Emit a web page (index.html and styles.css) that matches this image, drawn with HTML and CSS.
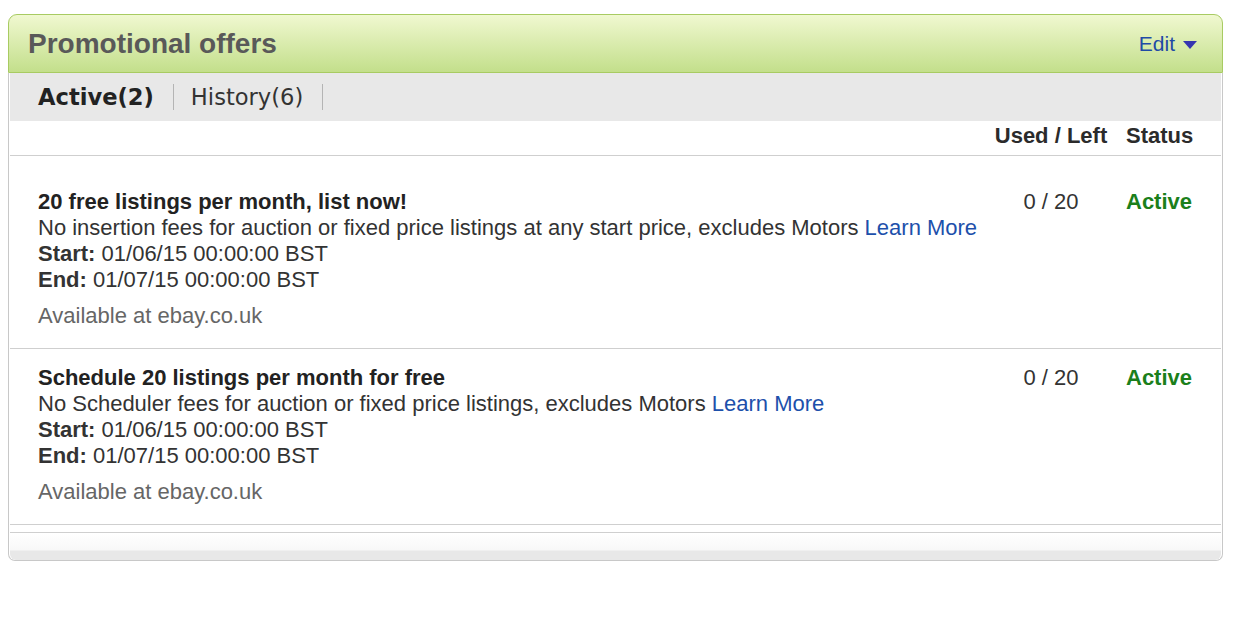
FILE: index.html
```html
<!DOCTYPE html>
<html lang="en">
<head>
  <meta charset="UTF-8">
  <meta name="viewport" content="width=device-width, initial-scale=1.0">
  <title>Promotional offers</title>
  <link rel="stylesheet" href="styles.css">
</head>
<body>
  <div class="panel">
    <div class="panel-head">
      <h2 class="title">Promotional offers</h2>
      <a href="javascript:;" class="edit">Edit <span class="caret"></span></a>
    </div>
    <div class="panel-body">
      <ul class="tabs">
        <li class="tab on"><a href="javascript:;">Active(2)</a></li>
        <li class="tab"><a href="javascript:;">History(6)</a></li>
      </ul>
      <div class="row head">
        <div></div>
        <div class="used">Used / Left</div>
        <div class="status">Status</div>
      </div>
      <div class="list">
        <div class="row offer">
          <div class="info">
            <div class="name">20 free listings per month, list now!</div>
            <div>No insertion fees for auction or fixed price listings at any start price, excludes Motors <a href="javascript:;" class="more">Learn More</a></div>
            <div><b>Start:</b> 01/06/15 00:00:00 BST</div>
            <div><b>End:</b> 01/07/15 00:00:00 BST</div>
            <div class="site">Available at ebay.co.uk</div>
          </div>
          <div class="used">0 / 20</div>
          <div class="status active">Active</div>
        </div>
        <div class="row offer">
          <div class="info">
            <div class="name">Schedule 20 listings per month for free</div>
            <div>No Scheduler fees for auction or fixed price listings, excludes Motors <a href="javascript:;" class="more">Learn More</a></div>
            <div><b>Start:</b> 01/06/15 00:00:00 BST</div>
            <div><b>End:</b> 01/07/15 00:00:00 BST</div>
            <div class="site">Available at ebay.co.uk</div>
          </div>
          <div class="used">0 / 20</div>
          <div class="status active">Active</div>
        </div>
      </div>
      <div class="panel-foot"></div>
    </div>
  </div>
</body>
</html>
```

FILE: styles.css
```css
body{
  margin: 0;
  background-color: #fff;
  font-family: "Liberation Sans", Arial, sans-serif;
  color: #333;
}

a{
  text-decoration: none;
}

ul{
  padding: 0;
  margin: 0;
  list-style: none;
}

.panel{
  width: 1215px;
  margin: 14px 0 0 8px;
}

.panel-head{
  display: flex;
  align-items: center;
  justify-content: space-between;
  height: 57px;
  padding: 0 25px 0 19px;
  border: 1px solid #a8cb62;
  border-radius: 9px 9px 0 0;
  background-image: linear-gradient(#f0f8d0, #c3df8b);
}

.panel-head .title{
  margin: 0;
  font-size: 28px;
  font-weight: bold;
  color: #595959;
}

.panel-head .edit{
  display: flex;
  align-items: center;
  gap: 8px;
  font-size: 21px;
  color: #1f4aa6;
}

.panel-head .caret{
  width: 0;
  height: 0;
  border-left: 7px solid transparent;
  border-right: 7px solid transparent;
  border-top: 8px solid #3535b0;
  margin-top: 2px;
}

.panel-body{
  padding: 0 1px;
  border: 1px solid #c8c8c8;
  border-top: 0;
  border-radius: 0 0 7px 7px;
}

.tabs{
  display: flex;
  align-items: center;
  height: 48px;
  padding-left: 28px;
  background-color: #e8e8e8;
  font-family: "DejaVu Sans", Verdana, sans-serif;
  font-size: 22.6px;
}

.tab{
  padding: 0 19px 0 17px;
  border-right: 1px solid #b4b4b4;
  line-height: 26px;
}

.tab:first-child{
  padding-left: 0;
}

.tab a{
  color: #333;
}

.tab.on a{
  font-weight: bold;
  color: #222;
}

.row{
  display: grid;
  grid-template-columns: minmax(0, 1fr) 116px 66px;
  column-gap: 17px;
  padding: 0 29px 0 28px;
  font-size: 22px;
  line-height: 26px;
  white-space: nowrap;
}

.row .used{
  text-align: center;
}

.row.head{
  height: 30px;
  padding-bottom: 4px;
  align-items: center;
  font-weight: bold;
  color: #2b2b2b;
  border-bottom: 1px solid #cfcfcf;
}

.list{
  padding-top: 17px;
}

.offer{
  padding-top: 16px;
  padding-bottom: 19px;
  border-bottom: 1px solid #cfcfcf;
}

.offer .name{
  font-weight: bold;
  color: #222;
}

.offer .more{
  color: #1d50ab;
}

.offer .site{
  margin-top: 10px;
  color: #666;
}

.status.active{
  font-weight: bold;
  color: #1b7f1b;
}

.panel-foot{
  height: 27px;
  margin-top: 7px;
  border-top: 1px solid #cfcfcf;
  border-radius: 0 0 6px 6px;
  background-image: linear-gradient(#fff 0, #f8f8f8 17px, #e8e8e8 18px, #e8e8e8 100%);
}
```
